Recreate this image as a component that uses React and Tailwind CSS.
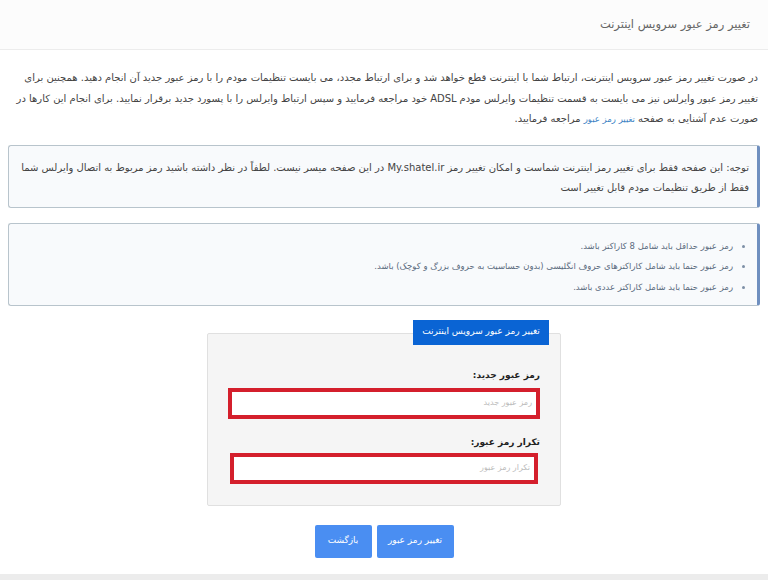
import React from 'react';

export default function App() {
    return (
        <div dir="rtl" className="w-[768px] h-[580px] bg-white flex flex-col text-[#444] overflow-hidden" style={{ fontFamily: '"DejaVu Sans", "Noto Sans", sans-serif' }}>
            {/* Header */}
            <header className="h-[50px] shrink-0 bg-[#fcfcfc] border-b border-[#ececec] flex items-center px-[18px]">
                <h1 className="text-[11.5px] text-[#666]">تغییر رمز عبور سرویس اینترنت</h1>
            </header>

            <main className="flex-1 flex flex-col px-[8px]">
                <p className="mt-[18px] px-[2px] text-[10px] leading-[20.5px] text-[#444] tracking-[-0.1px]">
                    در صورت تغییر رمز عبور سرویس اینترنت، ارتباط شما با اینترنت قطع خواهد شد و برای ارتباط مجدد، می بایست تنظیمات مودم را با رمز عبور جدید آن انجام دهید. همچنین برای تغییر رمز عبور وایرلس نیز می بایست به قسمت تنظیمات وایرلس مودم ADSL خود مراجعه فرمایید و سپس ارتباط وایرلس را با پسورد جدید برقرار نمایید. برای انجام این کارها در صورت عدم آشنایی به صفحه <span className="text-[8.5px] text-[#3b82c4]">تغییر رمز عبور</span> مراجعه فرمایید.
                </p>

                <div className="mt-[15px] h-[63px] bg-[#f8fafc] border border-[#b8c4cc] border-r-[3px] border-r-[#6f8fbf] rounded-[3px] px-[8px] pt-[12px] text-[10px] leading-[20px] text-[#444]">
                    توجه: این صفحه فقط برای تغییر رمز اینترنت شماست و امکان تغییر رمز My.shatel.ir در این صفحه میسر نیست. لطفاً در نظر داشته باشید رمز مربوط به اتصال وایرلس شما فقط از طریق تنظیمات مودم قابل تغییر است
                </div>

                <div className="mt-[15px] h-[83px] bg-[#f8fafc] border border-[#b8c4cc] border-r-[3px] border-r-[#6f8fbf] rounded-[3px] pr-[18px] pt-[12px]">
                    <ul className="list-disc pr-[6px] text-[8.5px] leading-[20.5px] text-[#5b6b7e] marker:text-[#7d8fa6]">
                        <li>رمز عبور حداقل باید شامل 8 کاراکتر باشد.</li>
                        <li>رمز عبور حتما باید شامل کاراکترهای حروف انگلیسی (بدون حساسیت به حروف بزرگ و کوچک) باشد.</li>
                        <li>رمز عبور حتما باید شامل کاراکتر عددی باشد.</li>
                    </ul>
                </div>

                {/* Form */}
                <div className="mt-[14px] flex justify-center">
                    <div className="w-[354px] flex flex-col">
                        <div className="flex pr-[12px] relative z-10">
                            <div className="w-[136px] h-[25px] bg-[#0a64d4] text-white text-[9px] flex items-center justify-center">
                                تغییر رمز عبور سرویس اینترنت
                            </div>
                        </div>
                        <div className="-mt-[12px] h-[173px] bg-[#f5f5f5] border border-[#e0e0e0] rounded-[2px] pt-[34px] px-[20px] flex flex-col">
                            <label className="text-[9px] font-bold text-[#222] leading-[14px]">رمز عبور جدید:</label>
                            <div className="mt-[6px] h-[31px] border-[4px] border-[#d41f2c] bg-white flex items-center px-[4px]">
                                <span className="text-[8px] text-[#bbb]">رمز عبور جدید</span>
                            </div>
                            <label className="mt-[16px] text-[9px] font-bold text-[#222] leading-[14px]">تکرار رمز عبور:</label>
                            <div className="mt-[4px] mx-[2px] h-[31px] border-[4px] border-[#d41f2c] bg-white flex items-center px-[4px]">
                                <span className="text-[8px] text-[#bbb]">تکرار رمز عبور</span>
                            </div>
                        </div>
                    </div>
                </div>

                <div className="mt-[19px] flex justify-center gap-[5px]">
                    <button className="w-[77px] h-[33px] bg-[#4a8ef2] rounded-[2px] text-white text-[9px]">تغییر رمز عبور</button>
                    <button className="w-[57px] h-[33px] bg-[#4a8ef2] rounded-[2px] text-white text-[9px]">بازگشت</button>
                </div>
            </main>

            <footer className="h-[6px] shrink-0 bg-[#ececec]" />
        </div>
    );
}
